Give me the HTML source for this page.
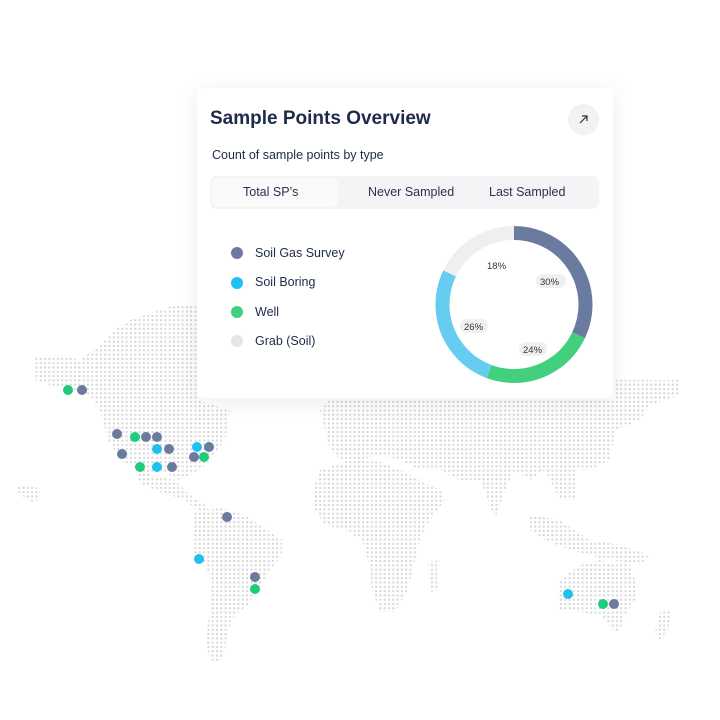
<!DOCTYPE html>
<html><head><meta charset="utf-8"><style>
*{margin:0;padding:0;box-sizing:border-box}
body{width:720px;height:720px;background:#fff;position:relative;overflow:hidden;font-family:"Liberation Sans",sans-serif;color:#1e2a4a}
.card{position:absolute;left:197px;top:88px;width:416px;height:310px;background:#fff;border-radius:6px;box-shadow:0 4px 24px rgba(0,0,0,0.08)}
.t{position:absolute;white-space:nowrap}
</style></head><body>
<svg width="720" height="720" style="position:absolute;left:0;top:0">
<defs><pattern id="d" width="4.3" height="4.3" patternUnits="userSpaceOnUse"><rect x="1" y="1" width="2" height="2" fill="#d6d6d6"/></pattern></defs>
<g fill="url(#d)">
<polygon points="35,357 60,355 80,360 100,345 115,330 130,320 160,310 175,305 197,305 197,400 230,410 225,440 210,460 200,470 190,475 180,480 175,478 160,470 150,475 145,480 140,470 120,460 108,440 100,410 90,395 70,390 50,385 35,380"/>
<polygon points="135,472 175,480 190,495 205,505 210,512 200,512 185,500 160,492 140,483"/>
<polygon points="195,512 220,508 245,515 260,525 282,540 282,555 270,570 258,590 248,605 235,615 228,630 225,650 220,662 210,660 205,640 210,610 212,580 205,565 195,555 192,535"/>
<polygon points="330,400 615,400 615,380 680,380 680,395 650,405 640,420 615,430 610,460 590,470 575,470 575,500 560,500 545,470 530,480 515,470 505,490 495,520 488,500 480,480 460,480 440,470 420,470 400,460 380,455 360,460 340,460 330,450 325,430 320,410"/>
<polygon points="320,470 350,460 380,462 400,470 420,480 440,490 445,500 430,520 420,540 415,560 408,590 395,612 380,612 372,590 368,560 362,540 345,530 325,525 315,510 313,490"/>
<polygon points="428,562 440,560 438,590 430,592"/>
<polygon points="560,580 580,565 600,560 615,565 628,560 635,580 635,600 625,615 620,630 615,632 600,615 580,612 560,610 557,595"/>
<polygon points="530,515 560,520 590,540 620,545 650,555 640,565 600,558 570,550 545,540 530,530"/>
<polygon points="660,612 672,610 668,630 660,640 655,632"/>
<polygon points="18,485 40,488 40,500 30,502 18,492"/>
</g>
<g>
<circle cx="68" cy="390" r="5" fill="#1FCB7C"/><circle cx="82" cy="390" r="5" fill="#6B7A9F"/>
<circle cx="117" cy="434" r="5" fill="#6B7A9F"/><circle cx="135" cy="437" r="5" fill="#1FCB7C"/>
<circle cx="146" cy="437" r="5" fill="#6B7A9F"/><circle cx="157" cy="437" r="5" fill="#6B7A9F"/>
<circle cx="157" cy="449" r="5" fill="#1EC0EE"/><circle cx="169" cy="449" r="5" fill="#6B7A9F"/>
<circle cx="122" cy="454" r="5" fill="#6B7A9F"/><circle cx="140" cy="467" r="5" fill="#1FCB7C"/>
<circle cx="157" cy="467" r="5" fill="#1EC0EE"/><circle cx="172" cy="467" r="5" fill="#6B7A9F"/>
<circle cx="197" cy="447" r="5" fill="#1EC0EE"/><circle cx="209" cy="447" r="5" fill="#6B7A9F"/>
<circle cx="194" cy="457" r="5" fill="#6B7A9F"/><circle cx="204" cy="457" r="5" fill="#1FCB7C"/>
<circle cx="227" cy="517" r="5" fill="#6B7A9F"/><circle cx="199" cy="559" r="5" fill="#1EC0EE"/>
<circle cx="255" cy="577" r="5" fill="#6B7A9F"/><circle cx="255" cy="589" r="5" fill="#1FCB7C"/>
<circle cx="568" cy="594" r="5" fill="#1EC0EE"/><circle cx="603" cy="604" r="5" fill="#1FCB7C"/>
<circle cx="614" cy="604" r="5" fill="#6B7A9F"/>
</g>
</svg>
<div class="card">
<div class="t" style="left:13px;top:20px;font-size:19px;font-weight:bold;color:#1e2a4a">Sample Points Overview</div>
<div style="position:absolute;left:371px;top:16px;width:31px;height:31px;border-radius:50%;background:#f2f2f3"></div>
<svg style="position:absolute;left:381px;top:26px" width="11" height="11"><path d="M2 9L9 2M4 2H9V7" stroke="#333" stroke-width="1.2" fill="none"/></svg>
<div class="t" style="left:15px;top:60px;font-size:12.5px;color:#1e2a4a">Count of sample points by type</div>
<div style="position:absolute;left:13px;top:88px;width:389px;height:33px;background:#f4f4f6;border-radius:7px"></div>
<div style="position:absolute;left:15px;top:90px;width:126px;height:29px;background:#fafafb;border-radius:6px"></div>
<div class="t" style="left:46px;top:97px;font-size:12.5px;color:#2a3350">Total SP’s</div>
<div class="t" style="left:171px;top:97px;font-size:12.5px;color:#2a3350">Never Sampled</div>
<div class="t" style="left:292px;top:97px;font-size:12.5px;color:#2a3350">Last Sampled</div>
<div style="position:absolute;left:34px;top:159px;width:12px;height:12px;border-radius:50%;background:#6B7A9F"></div>
<div style="position:absolute;left:34px;top:189px;width:12px;height:12px;border-radius:50%;background:#1EC0EE"></div>
<div style="position:absolute;left:34px;top:218px;width:12px;height:12px;border-radius:50%;background:#3ECF7F"></div>
<div style="position:absolute;left:34px;top:247px;width:12px;height:12px;border-radius:50%;background:#e4e5e8"></div>
<div class="t" style="left:58px;top:158px;font-size:12.5px">Soil Gas Survey</div>
<div class="t" style="left:58px;top:187px;font-size:12.5px">Soil Boring</div>
<div class="t" style="left:58px;top:217px;font-size:12.5px">Well</div>
<div class="t" style="left:58px;top:246px;font-size:12.5px">Grab (Soil)</div>
<svg style="position:absolute;left:0;top:0" width="416" height="310">
<g transform="translate(317,216.5) rotate(-90)" fill="none" stroke-width="14">
<circle r="71.5" stroke="#6B7A9F" stroke-dasharray="144 400" stroke-dashoffset="0"/>
<circle r="71.5" stroke="#42D07F" stroke-dasharray="106 400" stroke-dashoffset="-144"/>
<circle r="71.5" stroke="#66CCF0" stroke-dasharray="119 400" stroke-dashoffset="-250"/>
<circle r="71.5" stroke="#eeeff1" stroke-dasharray="81 400" stroke-dashoffset="-369"/>
</g>
<rect x="339" y="186" width="30" height="14" rx="7" fill="#f0f0f1"/>
<rect x="263" y="231" width="28" height="14" rx="7" fill="#f0f0f1"/>
<rect x="322" y="254" width="28" height="14" rx="7" fill="#f0f0f1"/>
<g font-size="9.5" fill="#333" font-family="Liberation Sans,sans-serif">
<text x="290" y="181">18%</text><text x="343" y="197">30%</text>
<text x="267" y="242">26%</text><text x="326" y="265">24%</text>
</g>
</svg>
</div>
</body></html>
